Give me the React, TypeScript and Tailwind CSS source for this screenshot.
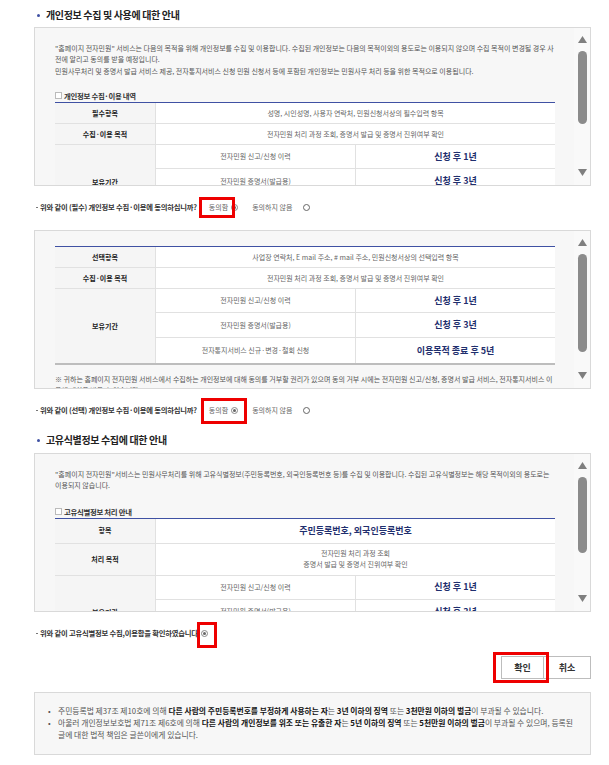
const font = "font-['Noto_Sans_CJK_KR','Noto_Sans',sans-serif]";

function Heading({ children, className }: { children: string; className: string }) {
  return (
    <div className={`flex items-center h-[18px] pl-[3px] ${className}`}>
      <span className="w-[3px] h-[3px] rounded-full bg-[#3f51a3] mr-[6px]" />
      <h2 className="text-[10px] leading-[18px] font-bold tracking-[-0.35px] text-[#222]">{children}</h2>
    </div>
  );
}

function ScrollBox({ children, thumbH, downTop }: { children: React.ReactNode; thumbH: string; downTop: string }) {
  return (
    <div className="h-[159px] border border-[#d9d9d9] bg-[#f7f7f7] flex overflow-hidden">
      <div className="flex-1 min-w-0 overflow-hidden pl-[20px] pr-[19px]">{children}</div>
      <div className="w-[16px] shrink-0 flex flex-col items-center pt-[8px] bg-[#f9f9f9]">
        <svg className="shrink-0" width="9" height="7" viewBox="0 0 9 7"><path d="M4.5 0L9 7H0Z" fill="#7f7f7f" /></svg>
        <div className={`w-[9px] mt-[8px] rounded-full bg-[#8b8b8b] shrink-0 ${thumbH}`} />
        <svg className={`shrink-0 ${downTop}`} width="9" height="7" viewBox="0 0 9 7"><path d="M4.5 7L0 0H9Z" fill="#7f7f7f" /></svg>
      </div>
    </div>
  );
}

function Radio({ on }: { on?: boolean }) {
  return (
    <span className={`inline-flex items-center justify-center w-[7px] h-[7px] rounded-full border shrink-0 bg-white ${on ? "border-[#888]" : "border-[#666]"}`}>
      {on && <span className="w-[3px] h-[3px] rounded-full bg-[#666]" />}
    </span>
  );
}

function Th({ children }: { children: string }) {
  return (
    <div className="w-[100px] shrink-0 bg-[#f5f5f5] flex items-center justify-center text-[7px] font-bold text-[#222]">
      {children}
    </div>
  );
}

function Row({ label, value, h }: { label: string; value: string; h: string }) {
  return (
    <div className={`flex border-b border-[#e1e1e1] ${h}`}>
      <Th>{label}</Th>
      <div className="flex-1 bg-white border-l border-[#e1e1e1] flex items-center justify-center text-[7px] text-[#666]">{value}</div>
    </div>
  );
}

function Retention({ third }: { third?: boolean }) {
  const rows = [
    ["전자민원 신고/신청 이력", "신청 후 1년", "h-[24px]"],
    ["전자민원 증명서(발급용)", "신청 후 3년", "h-[25px]"],
    ["전자통지서비스 신규·변경·철회 신청", "이용목적 종료 후 5년", "h-[25px]"],
  ];
  return (
    <div className={`flex ${third ? "border-b-2 border-[#bdbdbd]" : ""}`}>
      <Th>보유기간</Th>
      <div className="flex-1 bg-white border-l border-[#e1e1e1]">
        {rows.map(([a, b, h], i) => (
          <div key={a} className={`flex ${h} ${i < 2 ? "border-b border-[#e1e1e1]" : ""}`}>
            <div className="w-[200px] border-r border-[#e1e1e1] flex items-center justify-center text-[7px] text-[#666]">{a}</div>
            <div className="flex-1 flex items-center justify-center text-[9px] font-bold text-[#1f2f6e]">{b}</div>
          </div>
        ))}
      </div>
    </div>
  );
}

function Caption({ children }: { children: string }) {
  return (
    <div className="flex items-center h-[13px] text-[7.4px] font-bold tracking-[-0.3px] text-[#333]">
      <span className="w-[7px] h-[7px] border border-[#bbb] bg-white mr-[2px] shrink-0" />
      {children}
    </div>
  );
}

function Para({ children }: { children: React.ReactNode }) {
  return <p className="text-[7px] leading-[11.3px] text-[#555]">{children}</p>;
}

function Question({ children }: { children: React.ReactNode }) {
  return (
    <div className="flex items-center h-[14px] text-[7.3px] font-bold tracking-[-0.2px] text-[#333] whitespace-nowrap">
      <span className="w-[2px] h-[1px] bg-[#777] mx-[2px]" />
      {children}
    </div>
  );
}

function Agree({ children, box }: { children: string; box: string }) {
  return (
    <div className="flex items-center mt-[14px] relative">
      <Question>{children}</Question>
      <span className="text-[7px] text-[#666] ml-[12px]">동의함</span>
      <span className="ml-[3px] flex"><Radio on /></span>
      <span className="text-[7px] text-[#666] ml-[14px]">동의하지 않음</span>
      <span className="ml-[11px] flex"><Radio /></span>
      <RedBox className={box} />
    </div>
  );
}

function RedBox({ className }: { className: string }) {
  return <span className={`absolute border-[3px] border-[#ee0000] pointer-events-none ${className}`} />;
}

export default function App() {
  return (
    <div className={`${font} w-[609px] h-[765px] bg-white overflow-hidden pl-[34px] pr-[18px] pt-[6px]`}>
      <Heading className="mb-[3px]">개인정보 수집 및 사용에 대한 안내</Heading>
      <ScrollBox thumbH="h-[73px]" downTop="mt-[45px]">
        <div className="pt-[15px]">
          <Para>
            "홈페이지 전자민원" 서비스는 다음의 목적을 위해 개인정보를 수집 및 이용합니다. 수집된 개인정보는 다음의 목적이외의 용도로는 이용되지 않으며 수집 목적이 변경될 경우 사전에 알리고 동의를 받을 예정입니다.
            <br />
            민원사무처리 및 증명서 발급 서비스 제공, 전자통지서비스 신청 민원 신청서 등에 포함된 개인정보는 민원사무 처리 등을 위한 목적으로 이용됩니다.
          </Para>
          <div className="mt-[12px]"><Caption>개인정보 수집·이용 내역</Caption></div>
          <div className="border-t border-[#3f51a3]">
            <Row h="h-[21px]" label="필수항목" value="성명, 시인성명, 사용자 연락처, 민원신청서상의 필수입력 항목" />
            <Row h="h-[21px]" label="수집·이용 목적" value="전자민원 처리 과정 조회, 증명서 발급 및 증명서 진위여부 확인" />
            <Retention />
          </div>
        </div>
      </ScrollBox>

      <Agree box="left-[165px] top-[-3px] w-[36px] h-[21px]">위와 같이 (필수) 개인정보 수집·이용에 동의하십니까?</Agree>

      <div className="mt-[16px]">
        <ScrollBox thumbH="h-[98px]" downTop="mt-[20px]">
          <div className="pt-[15px]">
            <div className="border-t border-[#3f51a3]">
              <Row h="h-[21px]" label="선택항목" value="사업장 연락처, E mail 주소, # mail 주소, 민원신청서상의 선택입력 항목" />
              <Row h="h-[21px]" label="수집·이용 목적" value="전자민원 처리 과정 조회, 증명서 발급 및 증명서 진위여부 확인" />
              <Retention third />
            </div>
            <div className="mt-[9px]">
              <Para>
                ※ 귀하는 홈페이지 전자민원 서비스에서 수집하는 개인정보에 대해 동의를 거부할 권리가 있으며 동의 거부 시에는 전자민원 신고/신청, 증명서 발급 서비스, 전자통지서비스 이용에 제한을 받을 수 있습니다.
              </Para>
            </div>
          </div>
        </ScrollBox>
      </div>

      <Agree box="left-[167px] top-[-5px] w-[46px] h-[26px]">위와 같이 (선택) 개인정보 수집·이용에 동의하십니까?</Agree>

      <Heading className="mt-[14px] mb-[4px]">고유식별정보 수집에 대한 안내</Heading>
      <ScrollBox thumbH="h-[76px]" downTop="mt-[42px]">
        <div className="pt-[15px]">
          <Para>
            "홈페이지 전자민원"서비스는 민원사무처리를 위해 고유식별정보(주민등록번호, 외국인등록번호 등)를 수집 및 이용합니다. 수집된 고유식별정보는 해당 목적이외의 용도로는 이용되지 않습니다.
          </Para>
          <div className="mt-[13px]"><Caption>고유식별정보 처리 안내</Caption></div>
          <div className="border-t border-[#3f51a3]">
            <div className="flex h-[25px] border-b border-[#e1e1e1]">
              <Th>항목</Th>
              <div className="flex-1 bg-white border-l border-[#e1e1e1] flex items-center justify-center text-[9px] font-bold text-[#1f2f6e]">주민등록번호, 외국인등록번호</div>
            </div>
            <div className="flex h-[32px] border-b border-[#e1e1e1]">
              <Th>처리 목적</Th>
              <div className="flex-1 bg-white border-l border-[#e1e1e1] flex flex-col items-center justify-center text-[7px] leading-[11px] text-[#666]">
                <span>전자민원 처리 과정 조회</span>
                <span>증명서 발급 및 증명서 진위여부 확인</span>
              </div>
            </div>
            <Retention />
          </div>
        </div>
      </ScrollBox>

      <div className="flex items-center gap-[1px] mt-[14px] relative">
        <Question>위와 같이 고유식별정보 수집,이용함을 확인하였습니다.</Question>
        <Radio on />
        <RedBox className="left-[163px] top-[-4px] w-[20px] h-[26px]" />
      </div>

      <div className="flex justify-end mt-[16px] relative">
        <button className="w-[43px] h-[23px] border border-[#bdbdbd] bg-white text-[9px] font-bold text-[#333]">확인</button>
        <button className="w-[47px] h-[23px] border border-l-0 border-[#bdbdbd] bg-white text-[9px] font-bold text-[#333]">취소</button>
        <RedBox className="right-[42px] top-[-4px] w-[56px] h-[31px]" />
      </div>

      <div className="mt-[13px] h-[63px] border border-[#d9d9d9] bg-[#f7f7f7] pl-[13px] pr-[14px] pt-[12px]">
        <ul className="text-[7.8px] leading-[12px] text-[#555]">
          <li className="flex">
            <span className="w-[10px] shrink-0">•</span>
            <span>주민등록법 제37조 제10호에 의해 <b className="text-[#111]">다른 사람의 주민등록번호를 부정하게 사용하는 자</b>는 <b className="text-[#111]">3년 이하의 징역</b> 또는 <b className="text-[#111]">3천만원 이하의 벌금</b>이 부과될 수 있습니다.</span>
          </li>
          <li className="flex">
            <span className="w-[10px] shrink-0">•</span>
            <span>아울러 개인정보보호법 제71조 제6호에 의해 <b className="text-[#111]">다른 사람의 개인정보를 위조 또는 유출한 자</b>는 <b className="text-[#111]">5년 이하의 징역</b> 또는 <b className="text-[#111]">5천만원 이하의 벌금</b>이 부과될 수 있으며, 등록된 글에 대한 법적 책임은 글쓴이에게 있습니다.</span>
          </li>
        </ul>
      </div>
    </div>
  );
}
